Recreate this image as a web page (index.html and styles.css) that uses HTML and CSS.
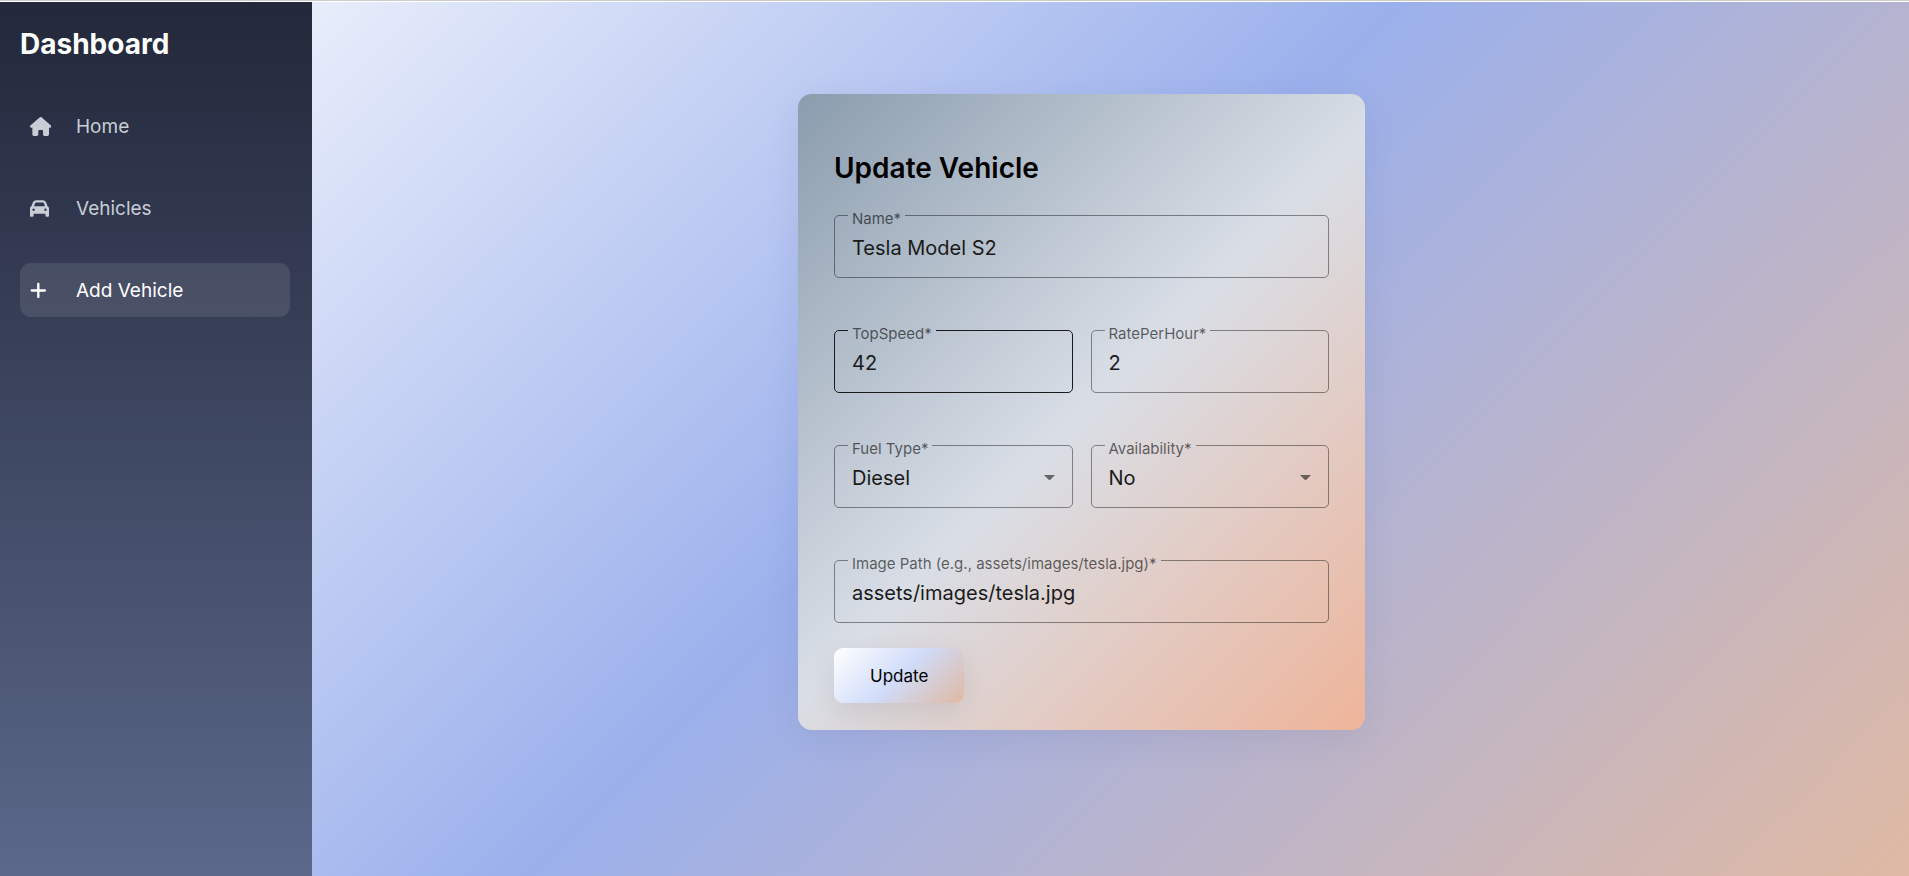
FILE: index.html
```html
<!DOCTYPE html>
<html lang="en">
<head>
  <meta charset="utf-8">
  <meta name="viewport" content="width=device-width, initial-scale=1">
  <title>Update Vehicle</title>
  <link rel="stylesheet" href="styles.css">
</head>
<body>
  <div class="app">
    <aside class="sidebar">
      <h1 class="brand">Dashboard</h1>
      <nav class="nav">
        <a class="nav-item" href="#home">
          <span class="nav-icon"><svg viewBox="0 0 576 512" aria-hidden="true"><path d="M575.8 255.5c0 18-15 32.1-32 32.1h-32l.7 160.2c0 2.7-.2 5.4-.5 8.1V472c0 22.1-17.9 40-40 40H456c-1.1 0-2.2 0-3.3-.1c-1.4 .1-2.8 .1-4.2 .1H416 392c-22.1 0-40-17.9-40-40V448 384c0-17.7-14.3-32-32-32H256c-17.7 0-32 14.3-32 32v64 24c0 22.1-17.9 40-40 40H160 128.1c-1.5 0-3-.1-4.5-.2c-1.2 .1-2.4 .2-3.6 .2H104c-22.1 0-40-17.9-40-40V360c0-.9 0-1.9 .1-2.8V287.6H32c-18 0-32-14-32-32.1c0-9 3-17 10-24L266.4 8c7-7 15-8 22-8s15 2 21 7L564.8 231.5c8 7 12 15 11 24z"/></svg></span>
          <span>Home</span>
        </a>
        <a class="nav-item" href="#vehicles">
          <span class="nav-icon"><svg viewBox="0 0 512 512" aria-hidden="true"><path d="M135.2 117.4L109.1 192H402.9l-26.1-74.6C372.3 104.6 360.2 96 346.6 96H165.4c-13.6 0-25.7 8.6-30.2 21.4zM39.6 196.8L74.8 96.3C88.3 57.8 124.6 32 165.4 32H346.6c40.8 0 77.1 25.8 90.6 64.3l35.2 100.5c23.2 9.6 39.6 32.5 39.6 59.2V400v48c0 17.7-14.3 32-32 32H448c-17.7 0-32-14.3-32-32V400H96v48c0 17.7-14.3 32-32 32H32c-17.7 0-32-14.3-32-32V400 256c0-26.7 16.4-49.6 39.6-59.2zM128 288a32 32 0 1 0 -64 0 32 32 0 1 0 64 0zm288 32a32 32 0 1 0 0-64 32 32 0 1 0 0 64z"/></svg></span>
          <span>Vehicles</span>
        </a>
        <a class="nav-item active" href="#add" aria-current="page">
          <span class="nav-icon"><svg viewBox="0 0 448 512" aria-hidden="true"><path d="M256 80c0-17.7-14.3-32-32-32s-32 14.3-32 32V224H48c-17.7 0-32 14.3-32 32s14.3 32 32 32H192V432c0 17.7 14.3 32 32 32s32-14.3 32-32V288H400c17.7 0 32-14.3 32-32s-14.3-32-32-32H256V80z"/></svg></span>
          <span>Add Vehicle</span>
        </a>
      </nav>
    </aside>
    <main class="content">
      <form class="card">
        <h2 class="title">Update Vehicle</h2>
        <div class="fields">
          <fieldset class="field wide">
            <legend><label for="name">Name*</label></legend>
            <input id="name" type="text" value="Tesla Model S2">
          </fieldset>
          <fieldset class="field hovered">
            <legend><label for="speed">TopSpeed*</label></legend>
            <input id="speed" type="text" inputmode="numeric" value="42">
          </fieldset>
          <fieldset class="field">
            <legend><label for="rate">RatePerHour*</label></legend>
            <input id="rate" type="text" inputmode="numeric" value="2">
          </fieldset>
          <fieldset class="field">
            <legend><label for="fuel">Fuel Type*</label></legend>
            <div class="select">
              <select id="fuel"><option>Diesel</option></select>
              <svg viewBox="0 0 10 5" aria-hidden="true"><path d="M0 0h10L5 5z"/></svg>
            </div>
          </fieldset>
          <fieldset class="field">
            <legend><label for="available">Availability*</label></legend>
            <div class="select">
              <select id="available"><option>No</option></select>
              <svg viewBox="0 0 10 5" aria-hidden="true"><path d="M0 0h10L5 5z"/></svg>
            </div>
          </fieldset>
          <fieldset class="field wide">
            <legend><label for="image">Image Path (e.g., assets/images/tesla.jpg)*</label></legend>
            <input id="image" type="text" value="assets/images/tesla.jpg">
          </fieldset>
        </div>
        <button class="submit" type="submit">Update</button>
      </form>
    </main>
  </div>
</body>
</html>
```
FILE: styles.css
```css
* {
  box-sizing: border-box;
}

body {
  margin: 0;
  font-family: Inter, "Open Sans", sans-serif;
  background: linear-gradient(135deg, #ffffff, #9bb0ec 50%, #dfb9a3);
}

.app {
  display: flex;
  min-height: 100vh;
  border-top: 1px solid #cccccc;
  box-shadow: inset 0 1px #ffffff;
  padding-top: 1px;
}

.sidebar {
  flex: none;
  width: 312px;
  padding: 24px 22px 24px 20px;
  background: linear-gradient(180deg, #23283a, #323950 28%, #5b688a);
}

.brand {
  margin: 0 0 37px;
  font-size: 28px;
  line-height: 36px;
  font-weight: 700;
  color: #ffffff;
}

.nav {
  display: flex;
  flex-direction: column;
  gap: 28px;
}

.nav-item {
  display: flex;
  align-items: center;
  height: 54px;
  padding: 0 10px;
  border-radius: 11px;
  font-size: 19px;
  color: #c8cdd6;
  text-decoration: none;
}

.nav-item.active {
  color: #ffffff;
  background: rgba(255, 255, 255, 0.1);
}

.nav-icon {
  display: flex;
  width: 46px;
}

.nav-icon svg {
  height: 19px;
  fill: currentColor;
}

.content {
  flex: 1;
  padding: 92px 82px 24px 24px;
}

.card {
  max-width: 567px;
  margin: 0 auto;
  padding: 56px 36px 27px;
  border-radius: 14px;
  background: linear-gradient(135deg, #8a9cae, #d9dee6 50%, #eeb499);
  box-shadow: 0 9px 36px rgba(31, 38, 100, 0.08);
}

.title {
  margin: 0 0 17px;
  font-size: 28px;
  line-height: 36px;
  font-weight: 600;
  color: #000000;
}

.fields {
  display: grid;
  grid-template-columns: 1fr 1fr;
  gap: 40px 18px;
}

.field {
  min-width: 0;
  margin: 0;
  padding: 0 13px 10px;
  border: 1px solid rgba(0, 0, 0, 0.42);
  border-radius: 5px;
}

.field.wide {
  grid-column: 1 / -1;
}

.field.hovered {
  border-color: #1a1a1a;
}

.field legend {
  padding: 6px 4px 0;
  font-size: 15px;
  line-height: 19px;
  color: rgba(0, 0, 0, 0.6);
}

.field input,
.field select {
  display: block;
  width: 100%;
  height: 39px;
  padding: 0 4px;
  border: 0;
  outline: 0;
  appearance: none;
  background: transparent;
  font-family: inherit;
  font-size: 20px;
  color: #1a1a1a;
}

.select {
  display: grid;
  grid-template-columns: 1fr 11px;
  align-items: center;
  padding-right: 4px;
}

.select svg {
  width: 11px;
  fill: rgba(0, 0, 0, 0.54);
}

.submit {
  display: block;
  height: 55px;
  margin-top: 25px;
  padding: 0 36px;
  border: 0;
  border-radius: 9px;
  font-family: inherit;
  font-size: 17px;
  color: #000000;
  background: linear-gradient(135deg, #ffffff, #d0dcf9 50%, #dfb9a3);
  box-shadow: 0 9px 28px rgba(0, 0, 0, 0.08);
}
```
